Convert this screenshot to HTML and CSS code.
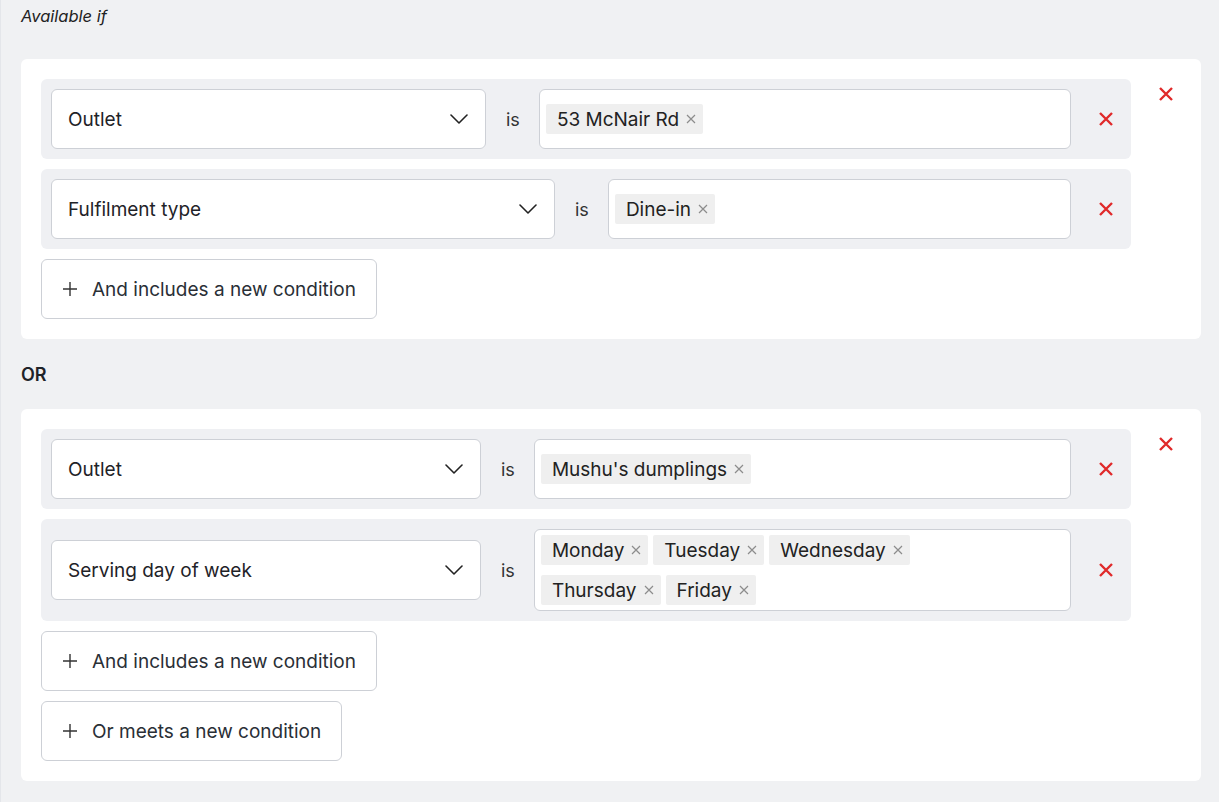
FILE: index.html
```html
<!DOCTYPE html>
<html lang="en">
<head>
  <meta charset="UTF-8" />
  <title>Availability rules</title>
  <link rel="stylesheet" href="styles.css">
</head>
<body>
<div class="rules">
  <p class="rules-title">Available if</p>

  <div class="rule-card">
    <div class="rule-body">
      <div class="cond-row">
        <div class="field-select w-outlet1">
          <span>Outlet</span>
          <svg class="chevron" viewBox="0 0 18 10"><path d="M1 1l8 8 8-8"/></svg>
        </div>
        <span class="op">is</span>
        <div class="field-tags">
          <span class="tag">53 McNair Rd<svg viewBox="0 0 10 10"><path d="M1 1l8 8M9 1L1 9"/></svg></span>
        </div>
        <button class="del-btn" aria-label="Remove condition">
          <svg viewBox="0 0 14 14"><path d="M1 1l12 12M13 1L1 13"/></svg>
        </button>
      </div>
      <div class="cond-row">
        <div class="field-select w-fulfil">
          <span>Fulfilment type</span>
          <svg class="chevron" viewBox="0 0 18 10"><path d="M1 1l8 8 8-8"/></svg>
        </div>
        <span class="op">is</span>
        <div class="field-tags">
          <span class="tag">Dine-in<svg viewBox="0 0 10 10"><path d="M1 1l8 8M9 1L1 9"/></svg></span>
        </div>
        <button class="del-btn" aria-label="Remove condition">
          <svg viewBox="0 0 14 14"><path d="M1 1l12 12M13 1L1 13"/></svg>
        </button>
      </div>
      <button class="add-btn">
        <svg viewBox="0 0 16 16"><path d="M8 1v14M1 8h14"/></svg>
        And includes a new condition
      </button>
    </div>
    <div class="rule-side">
      <button class="del-btn" aria-label="Remove rule">
        <svg viewBox="0 0 14 14"><path d="M1 1l12 12M13 1L1 13"/></svg>
      </button>
    </div>
  </div>

  <div class="or-label">OR</div>

  <div class="rule-card">
    <div class="rule-body">
      <div class="cond-row">
        <div class="field-select w-outlet2">
          <span>Outlet</span>
          <svg class="chevron" viewBox="0 0 18 10"><path d="M1 1l8 8 8-8"/></svg>
        </div>
        <span class="op">is</span>
        <div class="field-tags">
          <span class="tag">Mushu's dumplings<svg viewBox="0 0 10 10"><path d="M1 1l8 8M9 1L1 9"/></svg></span>
        </div>
        <button class="del-btn" aria-label="Remove condition">
          <svg viewBox="0 0 14 14"><path d="M1 1l12 12M13 1L1 13"/></svg>
        </button>
      </div>
      <div class="cond-row">
        <div class="field-select w-outlet2">
          <span>Serving day of week</span>
          <svg class="chevron" viewBox="0 0 18 10"><path d="M1 1l8 8 8-8"/></svg>
        </div>
        <span class="op">is</span>
        <div class="field-tags">
          <span class="tag">Monday<svg viewBox="0 0 10 10"><path d="M1 1l8 8M9 1L1 9"/></svg></span>
          <span class="tag">Tuesday<svg viewBox="0 0 10 10"><path d="M1 1l8 8M9 1L1 9"/></svg></span>
          <span class="tag">Wednesday<svg viewBox="0 0 10 10"><path d="M1 1l8 8M9 1L1 9"/></svg></span>
          <span class="tag">Thursday<svg viewBox="0 0 10 10"><path d="M1 1l8 8M9 1L1 9"/></svg></span>
          <span class="tag">Friday<svg viewBox="0 0 10 10"><path d="M1 1l8 8M9 1L1 9"/></svg></span>
        </div>
        <button class="del-btn" aria-label="Remove condition">
          <svg viewBox="0 0 14 14"><path d="M1 1l12 12M13 1L1 13"/></svg>
        </button>
      </div>
      <button class="add-btn">
        <svg viewBox="0 0 16 16"><path d="M8 1v14M1 8h14"/></svg>
        And includes a new condition
      </button>
      <button class="add-btn">
        <svg viewBox="0 0 16 16"><path d="M8 1v14M1 8h14"/></svg>
        Or meets a new condition
      </button>
    </div>
    <div class="rule-side">
      <button class="del-btn" aria-label="Remove rule">
        <svg viewBox="0 0 14 14"><path d="M1 1l12 12M13 1L1 13"/></svg>
      </button>
    </div>
  </div>
</div>
</body>
</html>
```

FILE: styles.css
```css
* { box-sizing: border-box; }
html, body {
  margin: 0;
  height: 100%;
}
body {
  font-family: Inter, "Noto Sans", Arial, sans-serif;
  background: #f0f1f3;
  color: #1f2328;
}
.rules {
  padding: 0 18px 21px 20px;
  border-left: 1px solid #e4e6ea;
}
.rules-title {
  margin: 0;
  padding: 6px 0 0;
  height: 59px;
  font-size: 16.5px;
  font-style: italic;
  color: #222;
}
.rule-card {
  display: flex;
  background: #fff;
  border-radius: 6px;
  padding: 20px 0 20px 20px;
}
.rule-body {
  flex: 1;
  display: flex;
  flex-direction: column;
  align-items: flex-start;
  gap: 10px;
}
.rule-side {
  width: 70px;
  display: flex;
  justify-content: center;
  align-items: flex-start;
}
.or-label {
  height: 70px;
  display: flex;
  align-items: center;
  font-size: 18px;
  font-weight: 600;
  color: #1f2328;
}

/* one condition line: field, operator, values, remove */
.cond-row {
  align-self: stretch;
  display: flex;
  align-items: center;
  background: #eff0f3;
  border-radius: 6px;
  padding: 10px;
}
.field-select {
  flex: none;
  height: 60px;
  display: flex;
  align-items: center;
  justify-content: space-between;
  padding: 0 17px 0 16px;
  background: #fff;
  border: 1px solid #cdd0d6;
  border-radius: 6px;
  font-size: 19px;
}
.w-outlet1 { width: 435px; }
.w-fulfil { width: 504px; }
.w-outlet2 { width: 430px; }
.chevron {
  width: 18px;
  height: 10px;
  fill: none;
  stroke: #222;
  stroke-width: 1.6;
  stroke-linecap: round;
  stroke-linejoin: round;
}
.op {
  padding: 0 19px 0 20px;
  font-size: 18px;
  color: #333;
}
.field-tags {
  flex: 1;
  min-height: 60px;
  display: flex;
  flex-wrap: wrap;
  align-content: center;
  gap: 10px 5px;
  padding: 5px 45px 5px 6px;
  background: #fff;
  border: 1px solid #cdd0d6;
  border-radius: 6px;
}
.tag {
  display: inline-flex;
  align-items: center;
  height: 30px;
  padding: 0 7px 0 11px;
  background: #efefef;
  border-radius: 2px;
  font-size: 19px;
  color: #222;
}
.tag svg {
  width: 10px;
  height: 10px;
  margin-left: 7px;
  fill: none;
  stroke: #8c8c8c;
  stroke-width: 1.2;
}

.del-btn {
  flex: none;
  width: 30px;
  height: 30px;
  margin-left: 20px;
  padding: 0;
  border: none;
  background: none;
  display: flex;
  align-items: center;
  justify-content: center;
  cursor: pointer;
}
.rule-side .del-btn { margin-left: 0; }
.del-btn svg {
  width: 14px;
  height: 14px;
  fill: none;
  stroke: #e02a2a;
  stroke-width: 2.4;
}

.add-btn {
  height: 60px;
  display: flex;
  align-items: center;
  gap: 14px;
  padding: 0 20px;
  background: #fff;
  border: 1px solid #cdd0d6;
  border-radius: 6px;
  font-family: inherit;
  font-size: 19px;
  color: #2a2f36;
  cursor: pointer;
}
.add-btn svg {
  width: 16px;
  height: 16px;
  fill: none;
  stroke: #333;
  stroke-width: 1.4;
}
```
